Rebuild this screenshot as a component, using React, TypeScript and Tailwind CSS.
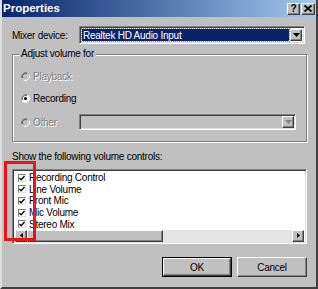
import React from "react";

const raised =
  "border-t border-l border-t-white border-l-white border-r border-b border-r-[#404040] border-b-[#404040] shadow-[inset_-1px_-1px_0_#808080]";
const sunken =
  "border-t border-l border-t-[#808080] border-l-[#808080] border-r border-b border-r-white border-b-white shadow-[inset_1px_1px_0_#404040,inset_-1px_-1px_0_#dfdfdf]";
const disabledText = "text-[#808080] [text-shadow:1px_1px_0_#fff]";

function DownArrow({ color = "#000" }: { color?: string }) {
  return (
    <svg width="7" height="4" viewBox="0 0 7 4">
      <path d="M0 0h7L3.5 4z" fill={color} />
    </svg>
  );
}

function Radio({ checked, disabled }: { checked?: boolean; disabled?: boolean }) {
  return (
    <svg width="9" height="9" viewBox="0 0 12 12" className="shrink-0">
      <circle cx="6" cy="6" r="5.5" fill={disabled ? "#c0c0c0" : "#fff"} />
      <path d="M1.2 8.5A5.5 5.5 0 0 1 8.5 1.2" stroke="#808080" strokeWidth="1.2" fill="none" />
      <path d="M2.3 8A4.3 4.3 0 0 1 8 2.3" stroke="#404040" strokeWidth="1" fill="none" />
      <path d="M10.8 3.5A5.5 5.5 0 0 1 3.5 10.8" stroke="#fff" strokeWidth="1.2" fill="none" />
      {checked && <circle cx="6" cy="6" r="2" fill="#000" />}
    </svg>
  );
}

function Check() {
  return (
    <div className="w-[8px] h-[8px] bg-white flex items-center justify-center shrink-0 border border-t-[#808080] border-l-[#808080] border-r-[#dfdfdf] border-b-[#dfdfdf]">
      <svg width="6" height="6" viewBox="0 0 7 7">
        <path d="M0.5 3.5L2.5 5.5L6.5 1.2" stroke="#000" strokeWidth="1.6" fill="none" />
      </svg>
    </div>
  );
}

export default function App() {
  const controls = ["Recording Control", "Line Volume", "Front Mic", "Mic Volume", "Stereo Mix"];

  return (
    <div className="relative w-[318px] h-[289px] bg-[#c0c0c0] font-['Liberation_Sans',Arial,sans-serif] text-[10px] tracking-[-0.25px] text-black border-l-2 border-l-[#dfdfdf] border-r-2 border-r-[#404040] border-b-2 border-b-[#404040] overflow-hidden">
      {/* title bar */}
      <div className="h-[17px] flex items-center justify-between pl-[1px] pr-[1px] bg-gradient-to-r from-[#0a246a] to-[#a6caf0]">
        <span className="text-white font-bold text-[11.5px] tracking-normal">Properties</span>
        <div className="flex gap-[1px]">
          <div className={`w-[13px] h-[12px] bg-[#c0c0c0] flex items-center justify-center font-bold text-[10px] leading-none tracking-normal ${raised}`}>
            ?
          </div>
          <div className={`w-[14px] h-[12px] bg-[#c0c0c0] flex items-center justify-center ${raised}`}>
            <svg width="8" height="7" viewBox="0 0 8 7">
              <path d="M0.5 0.5L7.5 6.5M7.5 0.5L0.5 6.5" stroke="#000" strokeWidth="1.8" />
            </svg>
          </div>
        </div>
      </div>

      <div className="pl-[10px] pr-[9px]">
        {/* mixer device */}
        <div className="mt-[9px] flex items-center h-[18px]">
          <span className="w-[67px]">Mixer device:</span>
          <div className={`w-[226px] h-[18px] bg-white flex items-stretch p-[3px] pr-[2px] ${sunken}`}>
            <div className="flex-1 bg-[#0a246a] text-white flex items-center pl-[1px] outline-1 outline-dotted outline-[#808080] -m-[1px] mr-[1px]">
              Realtek HD Audio Input
            </div>
            <div className={`w-[12px] bg-[#c0c0c0] flex items-center justify-center -my-[1px] ${raised}`}>
              <DownArrow />
            </div>
          </div>
        </div>

        {/* adjust volume group */}
        <div className="relative mt-[10px] h-[88px] border border-[#808080] shadow-[inset_1px_1px_0_#fff,1px_1px_0_#fff] pl-[8px] pt-[14px]">
          <span className="absolute left-[6px] top-[-7px] px-[2px] bg-[#c0c0c0] leading-[12px]">Adjust volume for</span>
          <div className="h-[14px] flex items-center gap-[3px]">
            <Radio disabled />
            <span className={disabledText}>Playback</span>
          </div>
          <div className="mt-[8px] h-[14px] flex items-center gap-[3px]">
            <Radio checked />
            <span>Recording</span>
          </div>
          <div className="mt-[9px] h-[16px] flex items-center">
            <div className="w-[58px] flex items-center gap-[3px]">
              <Radio disabled />
              <span className={disabledText}>Other</span>
            </div>
            <div className={`w-[217px] h-[16px] bg-[#c0c0c0] flex justify-end items-center pr-[1px] ${sunken}`}>
              <div className={`w-[12px] h-[12px] bg-[#c0c0c0] flex items-center justify-center ${raised}`}>
                <DownArrow color="#808080" />
              </div>
            </div>
          </div>
        </div>

        {/* volume controls */}
        <div className="mt-[9px] h-[12px] leading-[12px]">Show the following volume controls:</div>
        <div className={`mt-[6px] h-[75px] bg-white flex flex-col p-[2px] ${sunken}`}>
          <div className="flex-1">
            {controls.map((c) => (
              <div key={c} className="h-[11.6px] flex items-center gap-[3px] pl-[3px]">
                <Check />
                <span>{c}</span>
              </div>
            ))}
          </div>
          <div className="h-[12px] flex bg-[#e4e4e4]">
            <div className={`w-[12px] h-[12px] bg-[#c0c0c0] flex items-center justify-center ${raised}`}>
              <svg width="3" height="5" viewBox="0 0 3 5">
                <path d="M3 0v5L0 2.5z" fill="#000" />
              </svg>
            </div>
            <div className={`w-[136px] h-[12px] bg-[#c0c0c0] ${raised}`} />
            <div className="flex-1" />
            <div className={`w-[12px] h-[12px] bg-[#c0c0c0] flex items-center justify-center ${raised}`}>
              <svg width="3" height="5" viewBox="0 0 3 5">
                <path d="M0 0v5L3 2.5z" fill="#000" />
              </svg>
            </div>
          </div>
        </div>

        {/* buttons */}
        <div className="mt-[13px] flex justify-end gap-[5px]">
          <div className="w-[70px] h-[20px] border border-black">
            <div className={`w-full h-full bg-[#c0c0c0] flex items-center justify-center ${raised}`}>OK</div>
          </div>
          <div className={`w-[70px] h-[20px] bg-[#c0c0c0] flex items-center justify-center ${raised}`}>Cancel</div>
        </div>
      </div>

      {/* red annotation box */}
      <div className="absolute left-[2px] top-[161px] w-[32px] h-[80px] border-[3px] border-[#e8151b]" />
    </div>
  );
}
